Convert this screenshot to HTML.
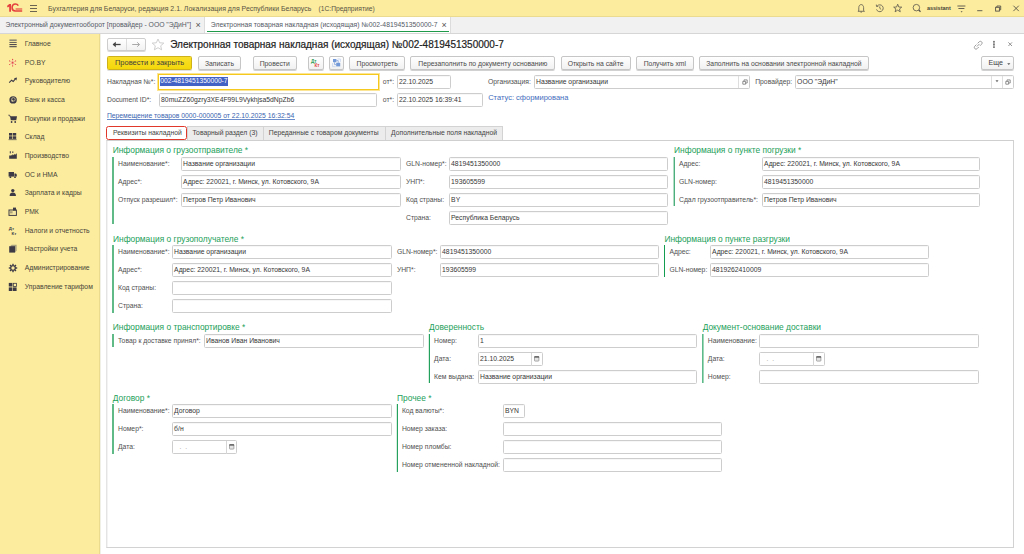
<!DOCTYPE html>
<html><head><meta charset="utf-8"><title>1C</title>
<style>
html,body{margin:0;padding:0;}
body{width:1024px;height:554px;overflow:hidden;position:relative;background:#fff;font-family:"Liberation Sans", sans-serif;}
.t{position:absolute;white-space:nowrap;font-family:"Liberation Sans", sans-serif;}
.b{position:absolute;box-sizing:border-box;}
</style></head><body>
<div class="b" style="left:0.00px;top:0.00px;width:1024.00px;height:16.50px;background:#fbec9e;border-bottom:1px solid #eadb90"></div>
<svg class="b" style="left:0px;top:0px" width="26" height="16" viewBox="0 0 26 16">
<path d="M6.9 6.0 L9.3 3.9 L11 3.9 L11 11.8 L9.2 11.8 L9.2 6.4 L7.8 7.4 Z" fill="#e5403e"/>
<path d="M18.3 5.6 C17.7 4.6 16.6 4.0 15.4 4.0 C13.3 4.0 12.1 5.7 12.1 7.8 C12.1 9.9 13.3 11.0 15.4 11.0 L22.2 11.0" fill="none" stroke="#e5403e" stroke-width="1.6"/>
<path d="M15.6 9.0 L22.2 9.0" stroke="#e5403e" stroke-width="1.1"/>
</svg>
<div class="b" style="left:30.00px;top:5.00px;width:7.30px;height:1.00px;background:#6b6452"></div>
<div class="b" style="left:30.00px;top:8.00px;width:7.30px;height:1.00px;background:#6b6452"></div>
<div class="b" style="left:30.00px;top:10.80px;width:7.30px;height:1.00px;background:#6b6452"></div>
<div class="t" style="left:48.10px;top:2.70px;font-size:6.95px;line-height:12px;color:#5a5344;font-weight:normal;">Бухгалтерия для Беларуси, редакция 2.1. Локализация для Республики Беларусь</div>
<div class="t" style="left:318.60px;top:2.70px;font-size:6.7px;line-height:12px;color:#5a5344;font-weight:normal;">(1С:Предприятие)</div>
<svg class="b" style="left:855px;top:1.2px" width="170" height="14" viewBox="0 0 170 14">
<g fill="none" stroke="#57524a" stroke-width="0.9">
<g transform="translate(6.2 7.2) scale(0.86) translate(-6.2 -7.2)"><path d="M3.4 10 L3.4 6.5 C3.4 4.4 4.6 3 6.2 3 C7.8 3 9 4.4 9 6.5 L9 10 L10 10.8 L2.4 10.8 Z"/><path d="M5.4 11.8 L7 11.8"/></g>
<g transform="translate(23.4 7.2) scale(0.86) translate(-23.4 -7.2)"><path d="M22 4.6 A4 4 0 1 1 21.2 8.6"/><path d="M21 3 L21.2 5.2 L23.3 5"/><path d="M25 5.2 L25 7.3 L26.6 8.6"/></g>
<g transform="translate(42.7 7) scale(0.86) translate(-42.7 -7)"><path d="M42.7 2.6 L44 5.9 L47.4 6 L44.8 8.1 L45.7 11.4 L42.7 9.5 L39.7 11.4 L40.6 8.1 L38 6 L41.4 5.9 Z"/></g>
<g transform="translate(62 7) scale(0.88) translate(-62 -7)"><circle cx="61.3" cy="6.6" r="3.7"/><path d="M64 9.3 L66 11.3" stroke-width="1.4"/></g>
<g transform="translate(0 0.9)">
<path d="M102.4 4.1 L110.4 4.1 M103.4 6.6 L109.4 6.6"/>
<path d="M122.2 8.8 L127.4 8.8"/>
<rect x="140.6" y="5.4" width="3.8" height="3.8"/><path d="M141.9 5.4 L141.9 4.1 L145.7 4.1 L145.7 7.9 L144.4 7.9"/>
<path d="M158.4 3.8 L163.8 9.2 M163.8 3.8 L158.4 9.2"/>
</g>
</g>
<path d="M105.6 10.2 L107.6 10.2 L106.6 11.4 Z" fill="#57524a"/>
</svg>
<div class="t" style="left:926.90px;top:2.20px;font-size:5.5px;line-height:12px;color:#4a4638;font-weight:bold;">assistant</div>
<div class="b" style="left:0.00px;top:16.50px;width:1024.00px;height:16.50px;background:#f1f1f1"></div>
<div class="b" style="left:0.00px;top:33.00px;width:1024.00px;height:1.00px;background:#d6d6d6"></div>
<div class="t" style="left:5.60px;top:19.00px;font-size:6.8px;line-height:12px;color:#555a66;font-weight:normal;">Электронный документооборот [провайдер - ООО &quot;ЭДиН&quot;]</div>
<div class="t" style="left:195.60px;top:18.80px;font-size:9px;line-height:12px;color:#555;font-weight:normal;">×</div>
<div class="b" style="left:204.20px;top:16.50px;width:1.00px;height:16.50px;background:#dcdcdc"></div>
<div class="b" style="left:205.20px;top:16.50px;width:244.80px;height:16.50px;background:#ffffff"></div>
<div class="b" style="left:450.00px;top:16.50px;width:1.00px;height:16.50px;background:#dcdcdc"></div>
<div class="b" style="left:207.00px;top:30.60px;width:242.40px;height:1.60px;background:#1e9a4a"></div>
<div class="t" style="left:210.80px;top:19.00px;font-size:6.8px;line-height:12px;color:#555a66;font-weight:normal;">Электронная товарная накладная (исходящая) №002-4819451350000-7</div>
<div class="t" style="left:441.60px;top:18.80px;font-size:9px;line-height:12px;color:#555;font-weight:normal;">×</div>
<div class="b" style="left:0.00px;top:34.00px;width:100.00px;height:520.00px;background:#fbec9e;box-shadow:inset -1px 0 0 #eadb8e"></div>
<div class="t" style="left:24.70px;top:38.00px;font-size:6.8px;line-height:12px;color:#48443a;font-weight:normal;">Главное</div>
<svg class="b" style="left:8px;top:39.00px" width="10" height="10" viewBox="0 0 10 10"><rect x="1.4" y="0.4" width="7.3" height="1.7" fill="#8d8873"/><rect x="1.4" y="3.0" width="7.3" height="1" fill="#6a665c"/><rect x="1.4" y="5.1" width="7.3" height="1" fill="#3d3a46"/><rect x="1.4" y="7.2" width="7.3" height="1" fill="#3d3a46"/></svg>
<div class="t" style="left:24.70px;top:56.68px;font-size:6.8px;line-height:12px;color:#48443a;font-weight:normal;">PO.BY</div>
<svg class="b" style="left:8px;top:57.68px" width="10" height="10" viewBox="0 0 10 10"><g stroke="#ec8f8f" stroke-width="0.6" fill="none"><path d="M4.6 1.6 L4.6 7.6"/><path d="M1.8 3 L7.4 6.4"/><path d="M7.4 3 L1.8 6.4"/></g><g fill="#e2474b"><circle cx="4.6" cy="4.7" r="0.9"/><circle cx="4.6" cy="1.4" r="0.6"/><circle cx="4.6" cy="7.9" r="0.6"/><circle cx="1.6" cy="2.9" r="0.55"/><circle cx="7.6" cy="2.9" r="0.55"/><circle cx="1.6" cy="6.5" r="0.55"/><circle cx="7.6" cy="6.5" r="0.55"/></g></svg>
<div class="t" style="left:24.70px;top:75.36px;font-size:6.8px;line-height:12px;color:#48443a;font-weight:normal;">Руководителю</div>
<svg class="b" style="left:8px;top:76.36px" width="10" height="10" viewBox="0 0 10 10"><path d="M1.2 6.6 L3.6 4.2 L5.2 5.4 L7.2 3.2" stroke="#3d3a46" stroke-width="1.1" fill="none"/><path d="M6 2.2 L9 1.6 L8.4 4.6 Z" fill="#3d3a46"/></svg>
<div class="t" style="left:24.70px;top:94.04px;font-size:6.8px;line-height:12px;color:#48443a;font-weight:normal;">Банк и касса</div>
<svg class="b" style="left:8px;top:95.04px" width="10" height="10" viewBox="0 0 10 10"><circle cx="5.1" cy="4.9" r="3.7" fill="#3d3a46"/><circle cx="5.4" cy="4.4" r="1.8" fill="none" stroke="#cfc59a" stroke-width="0.8"/><circle cx="4.3" cy="5.8" r="1" fill="#cfc59a"/></svg>
<div class="t" style="left:24.70px;top:112.72px;font-size:6.8px;line-height:12px;color:#48443a;font-weight:normal;">Покупки и продажи</div>
<svg class="b" style="left:8px;top:113.72px" width="10" height="10" viewBox="0 0 10 10"><path d="M0.4 1.2 L1.6 1.2 L2.4 3" stroke="#3d3a46" stroke-width="0.9" fill="none"/><path d="M2 2.2 L9 2.2 L8.3 6.2 L2.8 6.2 Z" fill="#3d3a46"/><circle cx="3.6" cy="8" r="0.9" fill="#3d3a46"/><circle cx="7.2" cy="8" r="0.9" fill="#3d3a46"/></svg>
<div class="t" style="left:24.70px;top:131.40px;font-size:6.8px;line-height:12px;color:#48443a;font-weight:normal;">Склад</div>
<svg class="b" style="left:8px;top:132.40px" width="10" height="10" viewBox="0 0 10 10"><rect x="1" y="1" width="3.3" height="2.6" fill="#3d3a46"/><rect x="4.9" y="1" width="3.3" height="2.6" fill="#3d3a46"/><rect x="1" y="4.3" width="3.3" height="2.6" fill="#3d3a46"/><rect x="4.9" y="4.3" width="3.3" height="2.6" fill="#3d3a46"/><rect x="0.6" y="7.4" width="8" height="0.7" fill="#3d3a46"/></svg>
<div class="t" style="left:24.70px;top:150.08px;font-size:6.8px;line-height:12px;color:#48443a;font-weight:normal;">Производство</div>
<svg class="b" style="left:8px;top:151.08px" width="10" height="10" viewBox="0 0 10 10"><rect x="1.8" y="0.2" width="1" height="2.2" fill="#3d3a46"/><rect x="4.3" y="0.4" width="1" height="1.6" fill="#3d3a46"/><path d="M1.2 4.6 L3.2 4.6 L4.8 3.2 L4.8 4.4 L6.8 2.8 L6.8 4 L8.8 2.2 L8.8 7.8 L1.2 7.8 Z" fill="#3d3a46"/></svg>
<div class="t" style="left:24.70px;top:168.76px;font-size:6.8px;line-height:12px;color:#48443a;font-weight:normal;">ОС и НМА</div>
<svg class="b" style="left:8px;top:169.76px" width="10" height="10" viewBox="0 0 10 10"><rect x="0.6" y="2" width="5.4" height="4.6" fill="#3d3a46"/><path d="M6.4 3.4 L8 3.4 L8.8 4.8 L8.8 6.6 L6.4 6.6 Z" fill="#3d3a46"/><circle cx="2.4" cy="7.2" r="0.9" fill="#3d3a46"/><circle cx="7" cy="7.2" r="0.9" fill="#3d3a46"/></svg>
<div class="t" style="left:24.70px;top:187.44px;font-size:6.8px;line-height:12px;color:#48443a;font-weight:normal;">Зарплата и кадры</div>
<svg class="b" style="left:8px;top:188.44px" width="10" height="10" viewBox="0 0 10 10"><circle cx="4.8" cy="2.6" r="1.7" fill="#3d3a46"/><path d="M1.6 8.1 C1.6 5.6 3 4.6 4.8 4.6 C6.6 4.6 8 5.6 8 8.1 Z" fill="#3d3a46"/></svg>
<div class="t" style="left:24.70px;top:206.12px;font-size:6.8px;line-height:12px;color:#48443a;font-weight:normal;">РМК</div>
<svg class="b" style="left:8px;top:207.12px" width="10" height="10" viewBox="0 0 10 10"><rect x="1" y="3" width="7.4" height="5.4" fill="none" stroke="#3d3a46" stroke-width="1"/><rect x="5" y="0.6" width="3" height="3" fill="#3d3a46"/><rect x="2" y="4.2" width="2.6" height="2.2" fill="#a9a07a"/><rect x="5.2" y="5.2" width="2.2" height="2.4" fill="#efe3a8"/></svg>
<div class="t" style="left:24.70px;top:224.80px;font-size:6.8px;line-height:12px;color:#48443a;font-weight:normal;">Налоги и отчетность</div>
<svg class="b" style="left:8px;top:225.80px" width="10" height="10" viewBox="0 0 10 10"><text x="0.8" y="4" font-family="Liberation Sans" font-size="4.4" font-weight="bold" fill="#3d3a46">Дт</text><text x="3.6" y="8.6" font-family="Liberation Sans" font-size="4.4" font-weight="bold" fill="#3d3a46">Кт</text></svg>
<div class="t" style="left:24.70px;top:243.48px;font-size:6.8px;line-height:12px;color:#48443a;font-weight:normal;">Настройки учета</div>
<svg class="b" style="left:8px;top:244.48px" width="10" height="10" viewBox="0 0 10 10"><path d="M2.4 2 L3.6 0.7 L8.6 0.7 L8.6 6.6 L7.2 8.4 Z" fill="#a9a27e"/><rect x="1.2" y="2.2" width="5.8" height="6.4" fill="#3d3a46"/></svg>
<div class="t" style="left:24.70px;top:262.16px;font-size:6.8px;line-height:12px;color:#48443a;font-weight:normal;">Администрирование</div>
<svg class="b" style="left:8px;top:263.16px" width="10" height="10" viewBox="0 0 10 10"><g fill="#3d3a46"><circle cx="5" cy="5" r="2.8"/><rect x="4.3" y="0.8" width="1.4" height="8.4"/><rect x="0.8" y="4.3" width="8.4" height="1.4"/><rect x="4.3" y="0.8" width="1.4" height="8.4" transform="rotate(45 5 5)"/><rect x="4.3" y="0.8" width="1.4" height="8.4" transform="rotate(-45 5 5)"/></g><circle cx="5" cy="5" r="1.7" fill="#fbec9e"/></svg>
<div class="t" style="left:24.70px;top:280.84px;font-size:6.8px;line-height:12px;color:#48443a;font-weight:normal;">Управление тарифом</div>
<svg class="b" style="left:8px;top:281.84px" width="10" height="10" viewBox="0 0 10 10"><rect x="0.8" y="0.9" width="3.6" height="3.6" fill="#3d3a46"/><rect x="5.3" y="1.3" width="3.2" height="3.2" fill="none" stroke="#3d3a46" stroke-width="0.8"/><rect x="0.8" y="5.4" width="3.6" height="3.6" fill="#3d3a46"/><rect x="5" y="5.4" width="3.6" height="3.6" fill="#3d3a46"/></svg>
<div class="b" style="left:107.00px;top:38.00px;width:39.00px;height:12.60px;border:1px solid #cdcdcd;border-radius:2px;background:linear-gradient(#fff,#f2f2f2);box-shadow:0 1px 0 rgba(0,0,0,0.15)"></div>
<div class="b" style="left:126.20px;top:38.80px;width:1.00px;height:11.20px;background:#dcdcdc"></div>
<svg class="b" style="left:112px;top:41px" width="30" height="7" viewBox="0 0 30 7">
<path d="M1.2 3.5 L8.6 3.5" stroke="#444" stroke-width="1.3"/><path d="M0.6 3.5 L3.8 0.8 L3.8 6.2 Z" fill="#444"/>
<path d="M20.2 3.5 L27.4 3.5" stroke="#a9a9a9" stroke-width="1"/><path d="M25.2 1.3 L27.6 3.5 L25.2 5.7" stroke="#a9a9a9" stroke-width="1" fill="none"/>
</svg>
<svg class="b" style="left:151px;top:38px" width="14" height="13" viewBox="0 0 14 13">
<path d="M7 1 L8.7 4.8 L12.8 5.1 L9.7 7.8 L10.6 11.8 L7 9.7 L3.4 11.8 L4.3 7.8 L1.2 5.1 L5.3 4.8 Z" fill="none" stroke="#c9c9c9" stroke-width="0.9"/>
</svg>
<div class="t" style="left:170.20px;top:38.10px;font-size:10px;line-height:14px;color:#222;font-weight:normal;-webkit-text-stroke:0.2px #222">Электронная товарная накладная (исходящая) №002-4819451350000-7</div>
<svg class="b" style="left:972px;top:39px" width="44" height="11" viewBox="0 0 44 11">
<g fill="none" stroke="#8a8a8a" stroke-width="0.85">
<path d="M4.4 5.6 L2.9 7.1 C2.1 7.9 2.1 8.9 2.8 9.6 C3.5 10.3 4.5 10.3 5.3 9.5 L6.8 8"/>
<path d="M5.6 4.4 L7.1 2.9 C7.9 2.1 8.9 2.1 9.6 2.8 C10.3 3.5 10.3 4.5 9.5 5.3 L8 6.8"/>
<path d="M4.9 7.5 L7.5 4.9"/>
</g>
<rect x="21.3" y="1.8" width="1.3" height="7.2" fill="#9a9a9a"/><rect x="21.3" y="2" width="1.3" height="1.3" fill="#666"/><rect x="21.3" y="4.8" width="1.3" height="1.3" fill="#666"/><rect x="21.3" y="7.6" width="1.3" height="1.3" fill="#666"/>
<path d="M36.4 3.4 L40 7 M40 3.4 L36.4 7" stroke="#888" stroke-width="0.9"/>
</svg>
<div class="b" style="left:106.90px;top:56.10px;width:85.40px;height:13.50px;border:1px solid #cfb21a;border-radius:1.5px;background:linear-gradient(#f9df2a,#f4d70a);box-shadow:0 1px 0 rgba(0,0,0,0.12)"></div>
<div class="t" style="left:106.90px;width:85.40px;text-align:center;top:57.20px;font-size:7.5px;line-height:12px;color:#44413a;font-weight:normal;">Провести и закрыть</div>
<div class="b" style="left:197.70px;top:56.10px;width:43.60px;height:13.60px;border:1px solid #c6c6c6;border-radius:2px;background:linear-gradient(#ffffff,#f1f1f1);box-shadow:0 1px 0 rgba(0,0,0,0.18)"></div>
<div class="t" style="left:197.70px;width:43.60px;text-align:center;top:57.50px;font-size:6.8px;line-height:12px;color:#4a4a4a;font-weight:normal;">Записать</div>
<div class="b" style="left:252.60px;top:56.10px;width:44.30px;height:13.60px;border:1px solid #c6c6c6;border-radius:2px;background:linear-gradient(#ffffff,#f1f1f1);box-shadow:0 1px 0 rgba(0,0,0,0.18)"></div>
<div class="t" style="left:252.60px;width:44.30px;text-align:center;top:57.50px;font-size:6.8px;line-height:12px;color:#4a4a4a;font-weight:normal;">Провести</div>
<div class="b" style="left:307.90px;top:56.10px;width:15.70px;height:13.60px;border:1px solid #c6c6c6;border-radius:2px;background:linear-gradient(#ffffff,#f1f1f1);box-shadow:0 1px 0 rgba(0,0,0,0.18)"></div>
<div class="b" style="left:328.70px;top:56.10px;width:15.70px;height:13.60px;border:1px solid #c6c6c6;border-radius:2px;background:linear-gradient(#ffffff,#f1f1f1);box-shadow:0 1px 0 rgba(0,0,0,0.18)"></div>
<svg class="b" style="left:310px;top:58px" width="12" height="10" viewBox="0 0 12 10">
<text x="1" y="4.6" font-family="Liberation Sans" font-size="4.6" font-weight="bold" fill="#2f9e55">Дт</text>
<text x="4.4" y="9.2" font-family="Liberation Sans" font-size="4.6" font-weight="bold" fill="#e0443a">Кт</text>
</svg>
<svg class="b" style="left:331px;top:58px" width="12" height="10" viewBox="0 0 12 10">
<rect x="2" y="1" width="3.4" height="3.2" fill="#7399d8"/><rect x="5.2" y="4.8" width="4" height="3.6" fill="#7399d8"/>
<path d="M3.6 4.2 L3.6 6.6 L5.2 6.6 M5.4 2.6 L7.2 2.6 L7.2 4.8" stroke="#7399d8" stroke-width="0.7" fill="none"/>
<path d="M1.6 5 L1.6 8.6 L4.6 8.6 M6.4 1 L9.4 1 L9.4 3.8" stroke="#b4c8ec" stroke-width="0.6" fill="none"/>
</svg>
<div class="b" style="left:349.30px;top:56.10px;width:55.70px;height:13.60px;border:1px solid #c6c6c6;border-radius:2px;background:linear-gradient(#ffffff,#f1f1f1);box-shadow:0 1px 0 rgba(0,0,0,0.18)"></div>
<div class="t" style="left:349.30px;width:55.70px;text-align:center;top:57.50px;font-size:6.8px;line-height:12px;color:#4a4a4a;font-weight:normal;">Просмотреть</div>
<div class="b" style="left:410.40px;top:56.10px;width:145.00px;height:13.60px;border:1px solid #c6c6c6;border-radius:2px;background:linear-gradient(#ffffff,#f1f1f1);box-shadow:0 1px 0 rgba(0,0,0,0.18)"></div>
<div class="t" style="left:410.40px;width:145.00px;text-align:center;top:57.50px;font-size:6.8px;line-height:12px;color:#4a4a4a;font-weight:normal;">Перезаполнить по документу основанию</div>
<div class="b" style="left:560.50px;top:56.10px;width:70.20px;height:13.60px;border:1px solid #c6c6c6;border-radius:2px;background:linear-gradient(#ffffff,#f1f1f1);box-shadow:0 1px 0 rgba(0,0,0,0.18)"></div>
<div class="t" style="left:560.50px;width:70.20px;text-align:center;top:57.50px;font-size:6.8px;line-height:12px;color:#4a4a4a;font-weight:normal;">Открыть на сайте</div>
<div class="b" style="left:636.00px;top:56.10px;width:57.60px;height:13.60px;border:1px solid #c6c6c6;border-radius:2px;background:linear-gradient(#ffffff,#f1f1f1);box-shadow:0 1px 0 rgba(0,0,0,0.18)"></div>
<div class="t" style="left:636.00px;width:57.60px;text-align:center;top:57.50px;font-size:6.8px;line-height:12px;color:#4a4a4a;font-weight:normal;">Получить xml</div>
<div class="b" style="left:698.70px;top:56.10px;width:170.50px;height:13.60px;border:1px solid #c6c6c6;border-radius:2px;background:linear-gradient(#ffffff,#f1f1f1);box-shadow:0 1px 0 rgba(0,0,0,0.18)"></div>
<div class="t" style="left:698.70px;width:170.50px;text-align:center;top:57.50px;font-size:6.8px;line-height:12px;color:#4a4a4a;font-weight:normal;">Заполнить на основании электронной накладной</div>
<div class="b" style="left:981.20px;top:56.10px;width:32.40px;height:13.60px;border:1px solid #c6c6c6;border-radius:2px;background:linear-gradient(#ffffff,#f1f1f1);box-shadow:0 1px 0 rgba(0,0,0,0.18)"></div>
<div class="t" style="left:988.60px;top:57.40px;font-size:7.1px;line-height:12px;color:#3f3f3f;font-weight:normal;">Еще</div>
<svg class="b" style="left:1006.9px;top:62.8px" width="5" height="3" viewBox="0 0 5 3"><path d="M0.2 0.2 L3.4 0.2 L1.8 2 Z" fill="#555"/></svg>
<div class="t" style="left:107.00px;top:75.70px;font-size:6.8px;line-height:12px;color:#505050;font-weight:normal;">Накладная №*:</div>
<div class="b" style="left:157.50px;top:73.50px;width:221.50px;height:16.00px;border:1px solid #f6c91f;box-shadow:0 0 0 1px rgba(249,208,60,0.55);background:#fff"></div>
<div class="b" style="left:160.00px;top:76.90px;width:68.00px;height:9.00px;background:#4262c6"></div>
<div class="t" style="left:160.30px;top:75.40px;font-size:6.65px;line-height:12px;color:#ffffff;font-weight:normal;">002-4819451350000-7</div>
<div class="t" style="left:382.80px;top:75.70px;font-size:6.8px;line-height:12px;color:#505050;font-weight:normal;">от*:</div>
<div class="b" style="left:397.00px;top:75.00px;width:54.00px;height:14.00px;border:1px solid #cdcdcd;border-radius:1.5px;background:#fff;box-shadow:inset 0 1px 0 rgba(0,0,0,0.03)"></div>
<div class="t" style="left:399.10px;top:75.60px;font-size:6.8px;line-height:12px;color:#363636;font-weight:normal;">22.10.2025</div>
<div class="t" style="left:488.00px;top:75.70px;font-size:6.8px;line-height:12px;color:#505050;font-weight:normal;">Организация:</div>
<div class="b" style="left:534.00px;top:75.00px;width:216.00px;height:14.00px;border:1px solid #cdcdcd;border-radius:1.5px;background:#fff;box-shadow:inset 0 1px 0 rgba(0,0,0,0.03)"></div>
<div class="t" style="left:536.10px;top:75.60px;font-size:6.8px;line-height:12px;color:#363636;font-weight:normal;">Название организации</div>
<div class="b" style="left:738.30px;top:76.00px;width:1.00px;height:12.00px;background:#dedede"></div>
<div class="t" style="left:755.20px;top:75.70px;font-size:6.8px;line-height:12px;color:#505050;font-weight:normal;">Провайдер:</div>
<div class="b" style="left:795.00px;top:75.00px;width:219.00px;height:14.00px;border:1px solid #cdcdcd;border-radius:1.5px;background:#fff;box-shadow:inset 0 1px 0 rgba(0,0,0,0.03)"></div>
<div class="t" style="left:797.10px;top:75.60px;font-size:6.8px;line-height:12px;color:#363636;font-weight:normal;">ООО &quot;ЭДиН&quot;</div>
<div class="b" style="left:991.30px;top:76.00px;width:1.00px;height:12.00px;background:#dedede"></div>
<div class="b" style="left:1002.30px;top:76.00px;width:1.00px;height:12.00px;background:#dedede"></div>
<svg class="b" style="left:995px;top:80px" width="5" height="3" viewBox="0 0 5 3"><path d="M0.5 0.3 L3.5 0.3 L2 2.2 Z" fill="#666"/></svg>
<svg class="b" style="left:1005.4px;top:79px" width="6" height="6" viewBox="0 0 6 6"><path d="M0.8 2.4 L3.6 2.4 L3.6 5.2 L0.8 5.2 Z M2 2.4 L2 0.9 L5.2 0.9 L5.2 4 L3.6 4" fill="none" stroke="#707070" stroke-width="0.75"/></svg>
<svg class="b" style="left:741.6px;top:79px" width="6" height="6" viewBox="0 0 6 6"><path d="M0.8 2.4 L3.6 2.4 L3.6 5.2 L0.8 5.2 Z M2 2.4 L2 0.9 L5.2 0.9 L5.2 4 L3.6 4" fill="none" stroke="#707070" stroke-width="0.75"/></svg>
<div class="t" style="left:107.00px;top:93.80px;font-size:6.8px;line-height:12px;color:#505050;font-weight:normal;">Document ID*:</div>
<div class="b" style="left:159.00px;top:93.00px;width:218.00px;height:14.00px;border:1px solid #cdcdcd;border-radius:1.5px;background:#fff;box-shadow:inset 0 1px 0 rgba(0,0,0,0.03)"></div>
<div class="t" style="left:161.10px;top:93.60px;font-size:6.8px;line-height:12px;color:#363636;font-weight:normal;">80muZZ60gzry3XE4F99L9Vykhjsa5dNpZb6</div>
<div class="t" style="left:382.80px;top:93.80px;font-size:6.8px;line-height:12px;color:#505050;font-weight:normal;">от*:</div>
<div class="b" style="left:397.00px;top:93.00px;width:86.00px;height:14.00px;border:1px solid #cdcdcd;border-radius:1.5px;background:#fff;box-shadow:inset 0 1px 0 rgba(0,0,0,0.03)"></div>
<div class="t" style="left:399.10px;top:93.60px;font-size:6.8px;line-height:12px;color:#363636;font-weight:normal;">22.10.2025 16:39:41</div>
<div class="t" style="left:488.20px;top:92.20px;font-size:7.5px;line-height:12px;color:#3f6cbd;font-weight:normal;">Статус: сформирована</div>
<div class="t" style="left:106.90px;top:110.20px;font-size:6.8px;line-height:12px;color:#3a64b0;font-weight:normal;">Перемещение товаров 0000-000005 от 22.10.2025 16:32:54</div>
<div class="b" style="left:107.00px;top:119.00px;width:188.20px;height:1.00px;background:#6a8ccb"></div>
<div class="b" style="left:106.00px;top:140.00px;width:908.00px;height:408.00px;border:1px solid #d2d2d2;border-left-color:#e4e4e4;border-top-color:#cfcfcf;box-shadow:inset 1px 0 0 #f3f3f3"></div>
<div class="b" style="left:100.00px;top:34.00px;width:1.20px;height:520.00px;background:#f1f0e6"></div>
<div class="b" style="left:186.80px;top:126.20px;width:316.00px;height:14.20px;background:#ececec;border:1px solid #d3d3d3;border-bottom:none"></div>
<div class="b" style="left:263.20px;top:127.00px;width:1.00px;height:13.20px;background:#d3d3d3"></div>
<div class="b" style="left:385.40px;top:127.00px;width:1.00px;height:13.20px;background:#d3d3d3"></div>
<div class="b" style="left:105.60px;top:126.20px;width:81.40px;height:14.20px;border:1.6px solid #e0392b;border-radius:2.5px;background:#fff"></div>
<div class="t" style="left:113.10px;top:127.30px;font-size:6.8px;line-height:12px;color:#444;font-weight:normal;">Реквизиты накладной</div>
<div class="t" style="left:192.50px;top:127.30px;font-size:6.8px;line-height:12px;color:#444;font-weight:normal;">Товарный раздел (3)</div>
<div class="t" style="left:268.80px;top:127.30px;font-size:6.8px;line-height:12px;color:#444;font-weight:normal;">Переданные с товаром документы</div>
<div class="t" style="left:391.00px;top:127.30px;font-size:6.8px;line-height:12px;color:#444;font-weight:normal;">Дополнительные поля накладной</div>
<div class="t" style="left:112.70px;top:143.60px;font-size:8.4px;line-height:12px;color:#23a05a;font-weight:normal;">Информация о грузоотправителе *</div>
<div class="b" style="left:112.00px;top:157.00px;width:1.00px;height:67.00px;background:#5fba88"></div>
<div class="b" style="left:113.00px;top:157.00px;width:1.00px;height:67.00px;background:#5fba88"></div>
<div class="t" style="left:118.00px;top:157.50px;font-size:6.8px;line-height:12px;color:#505050;font-weight:normal;">Наименование*:</div>
<div class="b" style="left:181.00px;top:157.00px;width:220.00px;height:14.00px;border:1px solid #cdcdcd;border-radius:1.5px;background:#fff;box-shadow:inset 0 1px 0 rgba(0,0,0,0.03)"></div>
<div class="t" style="left:183.10px;top:157.60px;font-size:6.8px;line-height:12px;color:#363636;font-weight:normal;">Название организации</div>
<div class="t" style="left:118.00px;top:175.50px;font-size:6.8px;line-height:12px;color:#505050;font-weight:normal;">Адрес*:</div>
<div class="b" style="left:181.00px;top:175.00px;width:220.00px;height:14.00px;border:1px solid #cdcdcd;border-radius:1.5px;background:#fff;box-shadow:inset 0 1px 0 rgba(0,0,0,0.03)"></div>
<div class="t" style="left:183.10px;top:175.60px;font-size:6.8px;line-height:12px;color:#363636;font-weight:normal;">Адрес: 220021, г. Минск, ул. Котовского, 9А</div>
<div class="t" style="left:118.00px;top:193.50px;font-size:6.8px;line-height:12px;color:#505050;font-weight:normal;">Отпуск разрешил*:</div>
<div class="b" style="left:181.00px;top:193.00px;width:220.00px;height:14.00px;border:1px solid #cdcdcd;border-radius:1.5px;background:#fff;box-shadow:inset 0 1px 0 rgba(0,0,0,0.03)"></div>
<div class="t" style="left:183.10px;top:193.60px;font-size:6.8px;line-height:12px;color:#363636;font-weight:normal;">Петров Петр Иванович</div>
<div class="t" style="left:406.00px;top:157.50px;font-size:6.8px;line-height:12px;color:#505050;font-weight:normal;">GLN-номер*:</div>
<div class="b" style="left:449.00px;top:157.00px;width:219.00px;height:14.00px;border:1px solid #cdcdcd;border-radius:1.5px;background:#fff;box-shadow:inset 0 1px 0 rgba(0,0,0,0.03)"></div>
<div class="t" style="left:451.10px;top:157.60px;font-size:6.8px;line-height:12px;color:#363636;font-weight:normal;">4819451350000</div>
<div class="t" style="left:406.00px;top:175.50px;font-size:6.8px;line-height:12px;color:#505050;font-weight:normal;">УНП*:</div>
<div class="b" style="left:449.00px;top:175.00px;width:219.00px;height:14.00px;border:1px solid #cdcdcd;border-radius:1.5px;background:#fff;box-shadow:inset 0 1px 0 rgba(0,0,0,0.03)"></div>
<div class="t" style="left:451.10px;top:175.60px;font-size:6.8px;line-height:12px;color:#363636;font-weight:normal;">193605599</div>
<div class="t" style="left:406.00px;top:193.50px;font-size:6.8px;line-height:12px;color:#505050;font-weight:normal;">Код страны:</div>
<div class="b" style="left:449.00px;top:193.00px;width:219.00px;height:14.00px;border:1px solid #cdcdcd;border-radius:1.5px;background:#fff;box-shadow:inset 0 1px 0 rgba(0,0,0,0.03)"></div>
<div class="t" style="left:451.10px;top:193.60px;font-size:6.8px;line-height:12px;color:#363636;font-weight:normal;">BY</div>
<div class="t" style="left:406.00px;top:211.50px;font-size:6.8px;line-height:12px;color:#505050;font-weight:normal;">Страна:</div>
<div class="b" style="left:449.00px;top:211.00px;width:219.00px;height:14.00px;border:1px solid #cdcdcd;border-radius:1.5px;background:#fff;box-shadow:inset 0 1px 0 rgba(0,0,0,0.03)"></div>
<div class="t" style="left:451.10px;top:211.60px;font-size:6.8px;line-height:12px;color:#363636;font-weight:normal;">Республика Беларусь</div>
<div class="t" style="left:674.10px;top:143.60px;font-size:8.4px;line-height:12px;color:#23a05a;font-weight:normal;">Информация о пункте погрузки *</div>
<div class="b" style="left:673.00px;top:157.00px;width:1.00px;height:49.00px;background:#b3dec5"></div>
<div class="b" style="left:674.00px;top:157.00px;width:1.00px;height:49.00px;background:#4caf7d"></div>
<div class="t" style="left:679.00px;top:157.50px;font-size:6.8px;line-height:12px;color:#505050;font-weight:normal;">Адрес:</div>
<div class="b" style="left:762.00px;top:157.00px;width:218.00px;height:14.00px;border:1px solid #cdcdcd;border-radius:1.5px;background:#fff;box-shadow:inset 0 1px 0 rgba(0,0,0,0.03)"></div>
<div class="t" style="left:764.10px;top:157.60px;font-size:6.8px;line-height:12px;color:#363636;font-weight:normal;">Адрес: 220021, г. Минск, ул. Котовского, 9А</div>
<div class="t" style="left:679.00px;top:175.50px;font-size:6.8px;line-height:12px;color:#505050;font-weight:normal;">GLN-номер:</div>
<div class="b" style="left:762.00px;top:175.00px;width:218.00px;height:14.00px;border:1px solid #cdcdcd;border-radius:1.5px;background:#fff;box-shadow:inset 0 1px 0 rgba(0,0,0,0.03)"></div>
<div class="t" style="left:764.10px;top:175.60px;font-size:6.8px;line-height:12px;color:#363636;font-weight:normal;">4819451350000</div>
<div class="t" style="left:679.00px;top:193.50px;font-size:6.8px;line-height:12px;color:#505050;font-weight:normal;">Сдал грузоотправитель*:</div>
<div class="b" style="left:762.00px;top:193.00px;width:218.00px;height:14.00px;border:1px solid #cdcdcd;border-radius:1.5px;background:#fff;box-shadow:inset 0 1px 0 rgba(0,0,0,0.03)"></div>
<div class="t" style="left:764.10px;top:193.60px;font-size:6.8px;line-height:12px;color:#363636;font-weight:normal;">Петров Петр Иванович</div>
<div class="t" style="left:113.00px;top:232.60px;font-size:8.4px;line-height:12px;color:#23a05a;font-weight:normal;">Информация о грузополучателе *</div>
<div class="b" style="left:112.00px;top:245.00px;width:1.00px;height:68.00px;background:#5fba88"></div>
<div class="b" style="left:113.00px;top:245.00px;width:1.00px;height:68.00px;background:#5fba88"></div>
<div class="t" style="left:118.00px;top:245.50px;font-size:6.8px;line-height:12px;color:#505050;font-weight:normal;">Наименование*:</div>
<div class="b" style="left:172.00px;top:245.00px;width:220.00px;height:14.00px;border:1px solid #cdcdcd;border-radius:1.5px;background:#fff;box-shadow:inset 0 1px 0 rgba(0,0,0,0.03)"></div>
<div class="t" style="left:174.10px;top:245.60px;font-size:6.8px;line-height:12px;color:#363636;font-weight:normal;">Название организации</div>
<div class="t" style="left:118.00px;top:263.50px;font-size:6.8px;line-height:12px;color:#505050;font-weight:normal;">Адрес*:</div>
<div class="b" style="left:172.00px;top:263.00px;width:220.00px;height:14.00px;border:1px solid #cdcdcd;border-radius:1.5px;background:#fff;box-shadow:inset 0 1px 0 rgba(0,0,0,0.03)"></div>
<div class="t" style="left:174.10px;top:263.60px;font-size:6.8px;line-height:12px;color:#363636;font-weight:normal;">Адрес: 220021, г. Минск, ул. Котовского, 9А</div>
<div class="t" style="left:118.00px;top:281.50px;font-size:6.8px;line-height:12px;color:#505050;font-weight:normal;">Код страны:</div>
<div class="b" style="left:172.00px;top:281.00px;width:220.00px;height:14.00px;border:1px solid #cdcdcd;border-radius:1.5px;background:#fff;box-shadow:inset 0 1px 0 rgba(0,0,0,0.03)"></div>
<div class="t" style="left:118.00px;top:299.50px;font-size:6.8px;line-height:12px;color:#505050;font-weight:normal;">Страна:</div>
<div class="b" style="left:172.00px;top:299.00px;width:220.00px;height:14.00px;border:1px solid #cdcdcd;border-radius:1.5px;background:#fff;box-shadow:inset 0 1px 0 rgba(0,0,0,0.03)"></div>
<div class="t" style="left:396.90px;top:245.50px;font-size:6.8px;line-height:12px;color:#505050;font-weight:normal;">GLN-номер*:</div>
<div class="b" style="left:440.00px;top:245.00px;width:219.00px;height:14.00px;border:1px solid #cdcdcd;border-radius:1.5px;background:#fff;box-shadow:inset 0 1px 0 rgba(0,0,0,0.03)"></div>
<div class="t" style="left:442.10px;top:245.60px;font-size:6.8px;line-height:12px;color:#363636;font-weight:normal;">4819451350000</div>
<div class="t" style="left:396.90px;top:263.50px;font-size:6.8px;line-height:12px;color:#505050;font-weight:normal;">УНП*:</div>
<div class="b" style="left:440.00px;top:263.00px;width:219.00px;height:14.00px;border:1px solid #cdcdcd;border-radius:1.5px;background:#fff;box-shadow:inset 0 1px 0 rgba(0,0,0,0.03)"></div>
<div class="t" style="left:442.10px;top:263.60px;font-size:6.8px;line-height:12px;color:#363636;font-weight:normal;">193605599</div>
<div class="t" style="left:664.40px;top:232.60px;font-size:8.4px;line-height:12px;color:#23a05a;font-weight:normal;">Информация о пункте разгрузки</div>
<div class="b" style="left:664.00px;top:245.00px;width:1.00px;height:32.00px;background:#139d50"></div>
<div class="t" style="left:669.40px;top:245.50px;font-size:6.8px;line-height:12px;color:#505050;font-weight:normal;">Адрес:</div>
<div class="b" style="left:710.00px;top:245.00px;width:219.00px;height:14.00px;border:1px solid #cdcdcd;border-radius:1.5px;background:#fff;box-shadow:inset 0 1px 0 rgba(0,0,0,0.03)"></div>
<div class="t" style="left:712.10px;top:245.60px;font-size:6.8px;line-height:12px;color:#363636;font-weight:normal;">Адрес: 220021, г. Минск, ул. Котовского, 9А</div>
<div class="t" style="left:669.40px;top:263.50px;font-size:6.8px;line-height:12px;color:#505050;font-weight:normal;">GLN-номер:</div>
<div class="b" style="left:710.00px;top:263.00px;width:219.00px;height:14.00px;border:1px solid #cdcdcd;border-radius:1.5px;background:#fff;box-shadow:inset 0 1px 0 rgba(0,0,0,0.03)"></div>
<div class="t" style="left:712.10px;top:263.60px;font-size:6.8px;line-height:12px;color:#363636;font-weight:normal;">4819262410009</div>
<div class="t" style="left:112.80px;top:321.00px;font-size:8.4px;line-height:12px;color:#23a05a;font-weight:normal;">Информация о транспортировке *</div>
<div class="b" style="left:112.00px;top:334.00px;width:1.00px;height:13.00px;background:#5fba88"></div>
<div class="b" style="left:113.00px;top:334.00px;width:1.00px;height:13.00px;background:#5fba88"></div>
<div class="t" style="left:118.00px;top:334.50px;font-size:6.8px;line-height:12px;color:#505050;font-weight:normal;">Товар к доставке принял*:</div>
<div class="b" style="left:204.00px;top:334.00px;width:220.00px;height:14.00px;border:1px solid #cdcdcd;border-radius:1.5px;background:#fff;box-shadow:inset 0 1px 0 rgba(0,0,0,0.03)"></div>
<div class="t" style="left:206.10px;top:334.60px;font-size:6.8px;line-height:12px;color:#363636;font-weight:normal;">Иванов Иван Иванович</div>
<div class="t" style="left:429.10px;top:321.00px;font-size:8.4px;line-height:12px;color:#23a05a;font-weight:normal;">Доверенность</div>
<div class="b" style="left:428.00px;top:334.00px;width:1.00px;height:49.00px;background:#d6eee0"></div>
<div class="b" style="left:429.00px;top:334.00px;width:1.00px;height:49.00px;background:#22a15c"></div>
<div class="t" style="left:434.10px;top:334.50px;font-size:6.8px;line-height:12px;color:#505050;font-weight:normal;">Номер:</div>
<div class="b" style="left:478.00px;top:334.00px;width:219.00px;height:14.00px;border:1px solid #cdcdcd;border-radius:1.5px;background:#fff;box-shadow:inset 0 1px 0 rgba(0,0,0,0.03)"></div>
<div class="t" style="left:480.10px;top:334.60px;font-size:6.8px;line-height:12px;color:#363636;font-weight:normal;">1</div>
<div class="t" style="left:434.10px;top:352.50px;font-size:6.8px;line-height:12px;color:#505050;font-weight:normal;">Дата:</div>
<div class="b" style="left:478.00px;top:352.00px;width:65.00px;height:14.00px;border:1px solid #cdcdcd;border-radius:1.5px;background:#fff"></div>
<div class="b" style="left:531.00px;top:352.50px;width:1.00px;height:13.00px;background:#d6d6d6"></div>
<div class="t" style="left:480.10px;top:352.60px;font-size:6.8px;line-height:12px;color:#363636;font-weight:normal;">21.10.2025</div>
<svg class="b" style="left:534.40px;top:355.70px" width="6" height="6" viewBox="0 0 6 6"><rect x="0.5" y="0.7" width="4.4" height="4.4" rx="0.6" fill="#e4e4e4" stroke="#8a8a8a" stroke-width="0.7"/><rect x="0.3" y="0.4" width="4.8" height="1.1" fill="#3e3e3e"/></svg>
<div class="t" style="left:434.10px;top:370.50px;font-size:6.8px;line-height:12px;color:#505050;font-weight:normal;">Кем выдана:</div>
<div class="b" style="left:478.00px;top:370.00px;width:219.00px;height:14.00px;border:1px solid #cdcdcd;border-radius:1.5px;background:#fff;box-shadow:inset 0 1px 0 rgba(0,0,0,0.03)"></div>
<div class="t" style="left:480.10px;top:370.60px;font-size:6.8px;line-height:12px;color:#363636;font-weight:normal;">Название организации</div>
<div class="t" style="left:702.70px;top:321.00px;font-size:8.4px;line-height:12px;color:#23a05a;font-weight:normal;">Документ-основание доставки</div>
<div class="b" style="left:702.00px;top:334.00px;width:1.00px;height:49.00px;background:#5dbb8b"></div>
<div class="b" style="left:703.00px;top:334.00px;width:1.00px;height:49.00px;background:#9fd6b6"></div>
<div class="t" style="left:707.80px;top:334.50px;font-size:6.8px;line-height:12px;color:#505050;font-weight:normal;">Наименование:</div>
<div class="b" style="left:759.00px;top:334.00px;width:220.00px;height:14.00px;border:1px solid #cdcdcd;border-radius:1.5px;background:#fff;box-shadow:inset 0 1px 0 rgba(0,0,0,0.03)"></div>
<div class="t" style="left:707.80px;top:352.50px;font-size:6.8px;line-height:12px;color:#505050;font-weight:normal;">Дата:</div>
<div class="b" style="left:759.00px;top:352.00px;width:66.00px;height:14.00px;border:1px solid #cdcdcd;border-radius:1.5px;background:#fff"></div>
<div class="b" style="left:813.00px;top:352.50px;width:1.00px;height:13.00px;background:#d6d6d6"></div>
<svg class="b" style="left:816.40px;top:355.70px" width="6" height="6" viewBox="0 0 6 6"><rect x="0.5" y="0.7" width="4.4" height="4.4" rx="0.6" fill="#e4e4e4" stroke="#8a8a8a" stroke-width="0.7"/><rect x="0.3" y="0.4" width="4.8" height="1.1" fill="#3e3e3e"/></svg>
<div class="t" style="left:766.50px;top:352.80px;font-size:6.8px;line-height:12px;color:#a0a0a0;font-weight:normal;">.</div>
<div class="t" style="left:772.20px;top:352.80px;font-size:6.8px;line-height:12px;color:#a0a0a0;font-weight:normal;">.</div>
<div class="t" style="left:707.80px;top:370.50px;font-size:6.8px;line-height:12px;color:#505050;font-weight:normal;">Номер:</div>
<div class="b" style="left:759.00px;top:370.00px;width:220.00px;height:14.00px;border:1px solid #cdcdcd;border-radius:1.5px;background:#fff;box-shadow:inset 0 1px 0 rgba(0,0,0,0.03)"></div>
<div class="t" style="left:112.80px;top:391.50px;font-size:8.4px;line-height:12px;color:#23a05a;font-weight:normal;">Договор *</div>
<div class="b" style="left:112.00px;top:404.00px;width:1.00px;height:50.00px;background:#5fba88"></div>
<div class="b" style="left:113.00px;top:404.00px;width:1.00px;height:50.00px;background:#5fba88"></div>
<div class="t" style="left:118.00px;top:404.50px;font-size:6.8px;line-height:12px;color:#505050;font-weight:normal;">Наименование*:</div>
<div class="b" style="left:172.00px;top:404.00px;width:220.00px;height:14.00px;border:1px solid #cdcdcd;border-radius:1.5px;background:#fff;box-shadow:inset 0 1px 0 rgba(0,0,0,0.03)"></div>
<div class="t" style="left:174.10px;top:404.60px;font-size:6.8px;line-height:12px;color:#363636;font-weight:normal;">Договор</div>
<div class="t" style="left:118.00px;top:422.50px;font-size:6.8px;line-height:12px;color:#505050;font-weight:normal;">Номер*:</div>
<div class="b" style="left:172.00px;top:422.00px;width:220.00px;height:14.00px;border:1px solid #cdcdcd;border-radius:1.5px;background:#fff;box-shadow:inset 0 1px 0 rgba(0,0,0,0.03)"></div>
<div class="t" style="left:174.10px;top:422.60px;font-size:6.8px;line-height:12px;color:#363636;font-weight:normal;">б/н</div>
<div class="t" style="left:118.00px;top:440.50px;font-size:6.8px;line-height:12px;color:#505050;font-weight:normal;">Дата:</div>
<div class="b" style="left:172.00px;top:440.00px;width:65.00px;height:14.00px;border:1px solid #cdcdcd;border-radius:1.5px;background:#fff"></div>
<div class="b" style="left:226.00px;top:440.50px;width:1.00px;height:13.00px;background:#d6d6d6"></div>
<svg class="b" style="left:228.90px;top:443.70px" width="6" height="6" viewBox="0 0 6 6"><rect x="0.5" y="0.7" width="4.4" height="4.4" rx="0.6" fill="#e4e4e4" stroke="#8a8a8a" stroke-width="0.7"/><rect x="0.3" y="0.4" width="4.8" height="1.1" fill="#3e3e3e"/></svg>
<div class="t" style="left:179.50px;top:440.80px;font-size:6.8px;line-height:12px;color:#a0a0a0;font-weight:normal;">.</div>
<div class="t" style="left:185.20px;top:440.80px;font-size:6.8px;line-height:12px;color:#a0a0a0;font-weight:normal;">.</div>
<div class="t" style="left:397.10px;top:391.50px;font-size:8.4px;line-height:12px;color:#23a05a;font-weight:normal;">Прочее *</div>
<div class="b" style="left:396.00px;top:404.00px;width:1.00px;height:68.00px;background:#d6eee0"></div>
<div class="b" style="left:397.00px;top:404.00px;width:1.00px;height:68.00px;background:#26a25e"></div>
<div class="t" style="left:401.90px;top:404.50px;font-size:6.8px;line-height:12px;color:#505050;font-weight:normal;">Код валюты*:</div>
<div class="b" style="left:503.00px;top:404.00px;width:22.00px;height:14.00px;border:1px solid #cdcdcd;border-radius:1.5px;background:#fff;box-shadow:inset 0 1px 0 rgba(0,0,0,0.03)"></div>
<div class="t" style="left:505.00px;top:404.60px;font-size:6.8px;line-height:12px;color:#363636;font-weight:normal;">BYN</div>
<div class="t" style="left:401.90px;top:422.50px;font-size:6.8px;line-height:12px;color:#505050;font-weight:normal;">Номер заказа:</div>
<div class="b" style="left:503.00px;top:422.00px;width:219.00px;height:14.00px;border:1px solid #cdcdcd;border-radius:1.5px;background:#fff;box-shadow:inset 0 1px 0 rgba(0,0,0,0.03)"></div>
<div class="t" style="left:401.90px;top:440.50px;font-size:6.8px;line-height:12px;color:#505050;font-weight:normal;">Номер пломбы:</div>
<div class="b" style="left:503.00px;top:440.00px;width:219.00px;height:14.00px;border:1px solid #cdcdcd;border-radius:1.5px;background:#fff;box-shadow:inset 0 1px 0 rgba(0,0,0,0.03)"></div>
<div class="t" style="left:401.90px;top:458.50px;font-size:6.8px;line-height:12px;color:#505050;font-weight:normal;">Номер отмененной накладной:</div>
<div class="b" style="left:503.00px;top:458.00px;width:219.00px;height:14.00px;border:1px solid #cdcdcd;border-radius:1.5px;background:#fff;box-shadow:inset 0 1px 0 rgba(0,0,0,0.03)"></div>
</body></html>
